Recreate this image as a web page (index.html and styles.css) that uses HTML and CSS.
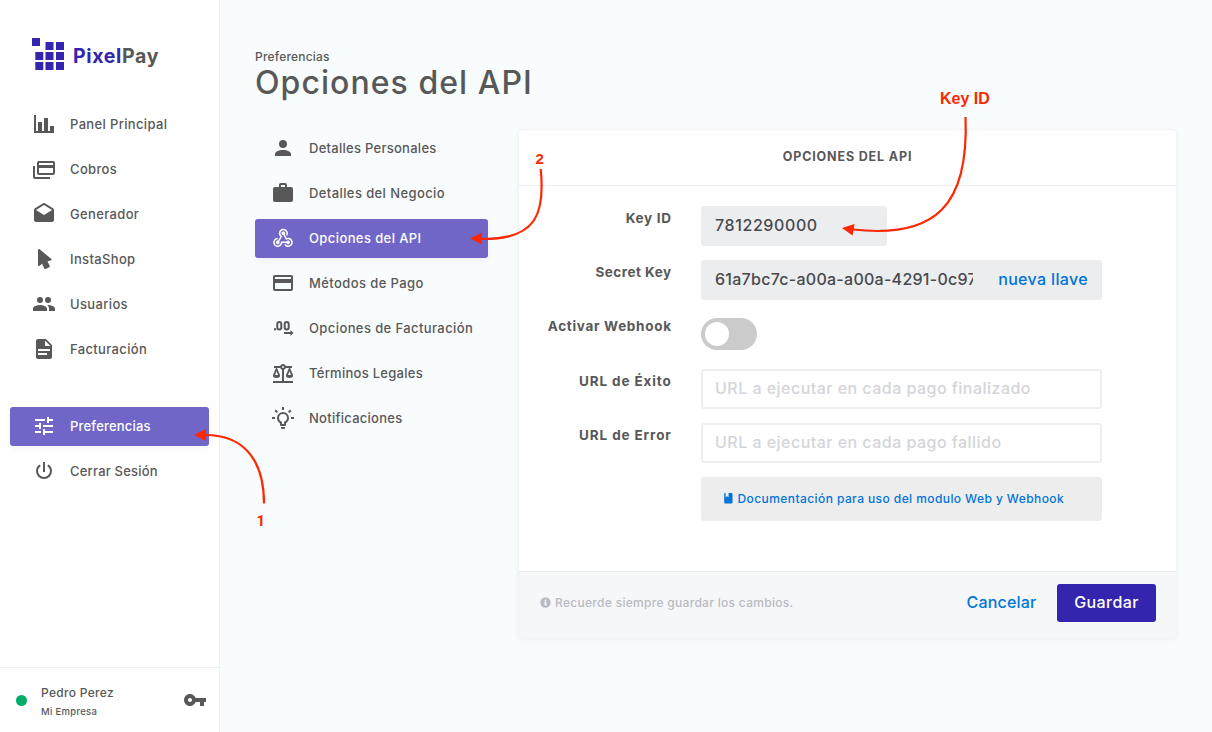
FILE: index.html
```html
<!DOCTYPE html>
<html lang="es">
<head>
<meta charset="utf-8">
<title>PixelPay - Opciones del API</title>
<link rel="stylesheet" href="styles.css">
</head>
<body>
<div class="app">
  <aside class="sidebar">
    <div class="brand">
      <svg class="brand-mark" width="32" height="32" viewBox="0 0 32 32"><path d="M0 0h8v8H0zM13.5 4h8v8h-8zM24 4h8v8h-8zM3.3 14h8v8h-8zM13.5 14h8v8h-8zM24 14h8v8h-8zM3.3 24h8v8h-8zM13.5 24h8v8h-8zM24 24h8v8h-8z"/></svg>
      <span class="brand-name"><span class="brand-pixel">Pixel</span>Pay</span>
    </div>
    <nav class="menu">
      <a class="item"><svg class="icon" viewBox="0 0 24 24"><path d="M22,21H2V3H4V19H6V10H10V19H12V6H16V19H18V14H22V21Z"/></svg><span>Panel Principal</span></a>
      <a class="item"><svg class="icon" viewBox="0 0 24 24"><path d="M21,8V6H7V8H21M21,16V11H7V16H21M21,4A2,2 0 0,1 23,6V16A2,2 0 0,1 21,18H7C5.89,18 5,17.1 5,16V6C5,4.89 5.89,4 7,4H21M3,20H18V22H3A2,2 0 0,1 1,20V9H3V20Z"/></svg><span>Cobros</span></a>
      <a class="item"><svg class="icon" viewBox="0 0 24 24"><path d="M4,8L12,13L20,8V8L12,3L4,8V8M22,8V18A2,2 0 0,1 20,20H4A2,2 0 0,1 2,18V8C2,7.27 2.39,6.64 2.97,6.29L12,0.64L21.03,6.29C21.61,6.64 22,7.27 22,8Z"/></svg><span>Generador</span></a>
      <a class="item"><svg class="icon" viewBox="0 0 24 24"><path d="M13.64,21.97C13.14,22.21 12.54,22 12.31,21.5L10.13,16.76L7.62,18.78C7.45,18.92 7.24,19 7,19A1,1 0 0,1 6,18V3A1,1 0 0,1 7,2C7.24,2 7.47,2.09 7.64,2.23L7.65,2.22L19.14,11.86C19.57,12.22 19.62,12.85 19.27,13.27C19.12,13.45 18.91,13.57 18.7,13.61L15.54,14.23L17.74,18.96C18,19.46 17.76,20.05 17.26,20.28L13.64,21.97Z"/></svg><span>InstaShop</span></a>
      <a class="item"><svg class="icon" viewBox="0 0 24 24"><path d="M16,13C15.71,13 15.38,13 15.03,13.05C16.19,13.89 17,15 17,16.5V19H23V16.5C23,14.17 18.33,13 16,13M8,13C5.67,13 1,14.17 1,16.5V19H15V16.5C15,14.17 10.33,13 8,13M8,11A3,3 0 0,0 11,8A3,3 0 0,0 8,5A3,3 0 0,0 5,8A3,3 0 0,0 8,11M16,11A3,3 0 0,0 19,8A3,3 0 0,0 16,5A3,3 0 0,0 13,8A3,3 0 0,0 16,11Z"/></svg><span>Usuarios</span></a>
      <a class="item"><svg class="icon" viewBox="0 0 24 24"><path d="M13,9H18.5L13,3.5V9M6,2H14L20,8V20A2,2 0 0,1 18,22H6C4.89,22 4,21.1 4,20V4C4,2.89 4.89,2 6,2M15,18V16H6V18H15M18,14V12H6V14H18Z"/></svg><span>Facturación</span></a>
    </nav>
    <nav class="menu menu-secondary">
      <a class="item active"><svg class="icon" viewBox="0 0 24 24"><path d="M3,17V19H9V17H3M3,5V7H13V5H3M13,21V19H21V17H13V15H11V21H13M7,9V11H3V13H7V15H9V9H7M21,13V11H11V13H21M15,9H17V7H21V5H17V3H15V9Z"/></svg><span>Preferencias</span></a>
      <a class="item"><svg class="icon" viewBox="0 0 24 24"><path d="M16.56,5.44L15.11,6.89C16.84,7.94 18,9.83 18,12A6,6 0 0,1 12,18A6,6 0 0,1 6,12C6,9.83 7.16,7.94 8.88,6.88L7.44,5.44C5.36,6.88 4,9.28 4,12A8,8 0 0,0 12,20A8,8 0 0,0 20,12C20,9.28 18.64,6.88 16.56,5.44M13,3H11V13H13"/></svg><span>Cerrar Sesión</span></a>
    </nav>
    <div class="account">
      <span class="status"></span>
      <div class="who"><span class="who-name">Pedro Perez</span><span class="who-org">Mi Empresa</span></div>
      <svg class="icon" viewBox="0 0 24 24"><path d="M12.65 10C11.83 7.67 9.61 6 7 6c-3.31 0-6 2.69-6 6s2.69 6 6 6c2.61 0 4.83-1.67 5.65-4H17v4h4v-4h2v-4H12.65zM7 14c-1.1 0-2-.9-2-2s.9-2 2-2 2 .9 2 2-.9 2-2 2z"/></svg>
    </div>
  </aside>

  <main class="main">
    <header class="heading">
      <span class="crumb">Preferencias</span>
      <h1 class="title">Opciones del API</h1>
    </header>
    <div class="columns">
      <nav class="menu submenu">
        <a class="item"><svg class="icon" viewBox="0 0 24 24"><path d="M12,4A4,4 0 0,1 16,8A4,4 0 0,1 12,12A4,4 0 0,1 8,8A4,4 0 0,1 12,4M12,14C16.42,14 20,15.79 20,18V20H4V18C4,15.79 7.58,14 12,14Z"/></svg><span>Detalles Personales</span></a>
        <a class="item"><svg class="icon" viewBox="0 0 24 24"><path d="M10,2H14A2,2 0 0,1 16,4V6H20A2,2 0 0,1 22,8V19A2,2 0 0,1 20,21H4C2.89,21 2,20.1 2,19V8C2,6.89 2.89,6 4,6H8V4C8,2.89 8.89,2 10,2M14,6V4H10V6H14Z"/></svg><span class="loose">Detalles del Negocio</span></a>
        <a class="item active"><svg class="icon" viewBox="0 0 24 24"><path d="M10.46,19C9,21.07 6.15,21.59 4.09,20.15C2.04,18.71 1.56,15.84 3,13.75C3.87,12.5 5.21,11.83 6.58,11.77L6.63,13.2C5.72,13.27 4.84,13.74 4.27,14.56C3.27,16 3.58,17.94 4.95,18.91C6.33,19.87 8.26,19.5 9.26,18.07C9.57,17.62 9.75,17.13 9.82,16.63V15.62L15.4,15.58L15.47,15.47C16,14.55 17.15,14.23 18.05,14.75C18.95,15.27 19.26,16.43 18.73,17.35C18.2,18.26 17.04,18.58 16.14,18.06C15.73,17.83 15.44,17.46 15.31,17.04L11.24,17.06C11.13,17.73 10.87,18.38 10.46,19M17.74,11.86C20.27,12.17 22.07,14.44 21.76,16.93C21.45,19.43 19.15,21.2 16.62,20.89C15.13,20.71 13.9,19.86 13.19,18.68L14.43,17.96C14.92,18.73 15.75,19.28 16.75,19.41C18.5,19.62 20.05,18.43 20.26,16.76C20.47,15.09 19.23,13.56 17.5,13.35C16.96,13.29 16.44,13.36 15.97,13.53L15.12,13.97L12.54,9.2H12.32C11.26,9.16 10.41,8.29 10.44,7.25C10.47,6.21 11.4,5.4 12.45,5.44C13.5,5.5 14.33,6.35 14.3,7.39C14.28,7.83 14.11,8.23 13.84,8.54L15.74,12.05C16.36,11.85 17.04,11.78 17.74,11.86M8.25,9.14C7.25,6.79 8.31,4.1 10.62,3.12C12.94,2.14 15.62,3.25 16.62,5.6C17.21,6.97 17.09,8.47 16.42,9.67L15.18,8.95C15.6,8.14 15.67,7.15 15.27,6.22C14.59,4.62 12.78,3.85 11.23,4.5C9.67,5.16 8.97,7 9.65,8.6C9.93,9.26 10.4,9.77 10.97,10.11L11.36,10.32L8.29,15.31C8.32,15.36 8.36,15.42 8.39,15.5C8.88,16.41 8.54,17.56 7.62,18.05C6.71,18.54 5.56,18.18 5.06,17.24C4.57,16.31 4.91,15.16 5.83,14.67C6.22,14.46 6.65,14.41 7.06,14.5L9.37,10.73C8.9,10.3 8.5,9.76 8.25,9.14Z"/></svg><span class="loose">Opciones del API</span></a>
        <a class="item"><svg class="icon" viewBox="0 0 24 24"><path d="M20,8H4V6H20M20,18H4V12H20M20,4H4C2.89,4 2,4.89 2,6V18A2,2 0 0,0 4,20H20A2,2 0 0,0 22,18V6C22,4.89 21.1,4 20,4Z"/></svg><span class="loose">Métodos de Pago</span></a>
        <a class="item"><svg class="icon" viewBox="0 0 24 24"><rect x="3" y="12.200" width="2" height="2.200"/><g class="stroke"><rect x="6.300" y="6.100" width="4" height="7.300" rx="1.900"/><rect x="13.700" y="6.100" width="4" height="7.300" rx="1.900"/></g><path d="M13 16h6.500v-2l3 3-3 3v-2H13z"/></svg><span class="loose">Opciones de Facturación</span></a>
        <a class="item"><svg class="icon" viewBox="0 0 24 24"><path d="M12,3C10.73,3 9.6,3.8 9.18,5H3V7H4.95L2,14C1.53,16 3,17 5.5,17C8,17 9.56,16 9,14L6.05,7H9.17C9.5,7.85 10.15,8.5 11,8.83V20H2V22H22V20H13V8.82C13.85,8.5 14.5,7.85 14.82,7H17.95L15,14C14.53,16 16,17 18.5,17C21,17 22.56,16 22,14L19.05,7H21V5H14.83C14.4,3.8 13.27,3 12,3M12,5A1,1 0 0,1 13,6A1,1 0 0,1 12,7A1,1 0 0,1 11,6A1,1 0 0,1 12,5M5.5,10.25L7,14H4L5.5,10.25M18.5,10.25L20,14H17L18.5,10.25Z"/></svg><span>Términos Legales</span></a>
        <a class="item"><svg class="icon" viewBox="0 0 24 24"><path d="M20,11H23V13H20V11M1,11H4V13H1V11M13,1V4H11V1H13M4.92,3.5L7.05,5.64L5.63,7.05L3.5,4.93L4.92,3.5M16.95,5.63L19.07,3.5L20.5,4.93L18.37,7.05L16.95,5.63M12,6A6,6 0 0,1 18,12C18,14.22 16.79,16.16 15,17.2V19A1,1 0 0,1 14,20H10A1,1 0 0,1 9,19V17.2C7.21,16.16 6,14.22 6,12A6,6 0 0,1 12,6M14,21V22A1,1 0 0,1 13,23H11A1,1 0 0,1 10,22V21H14M11,18H13V15.87C14.73,15.43 16,13.86 16,12A4,4 0 0,0 12,8A4,4 0 0,0 8,12C8,13.86 9.27,15.43 11,15.87V18Z"/></svg><span>Notificaciones</span></a>
      </nav>

      <section class="card">
        <h2 class="card-title">OPCIONES DEL API</h2>
        <div class="form">
          <span class="label">Key ID</span>
          <div class="field readonly short"><span class="key-value">7812290000</span></div>
          <span class="label label-secret">Secret Key</span>
          <div class="field readonly"><span class="secret">61a7bc7c-a00a-a00a-4291-0c97</span><a class="link renew">nueva llave</a></div>
          <span class="label">Activar Webhook</span>
          <div class="toggle-row"><span class="toggle"></span></div>
          <span class="label label-url">URL de Éxito</span>
          <div class="field"><span class="placeholder">URL a ejecutar en cada pago finalizado</span></div>
          <span class="label label-url">URL de Error</span>
          <div class="field"><span class="placeholder">URL a ejecutar en cada pago fallido</span></div>
          <div class="docs"><svg width="9" height="11" viewBox="0 0 9 11"><path d="M1.2 0H1.6V4.2L3.1 3.2L4.6 4.2V0H7.4Q8.5 0 8.5 1V9.6Q8.5 10.6 7.4 10.6H1.2Q.2 10.6 .2 9.6V1Q.2 0 1.2 0Z"/></svg><a class="link docs-link">Documentación para uso del modulo Web y Webhook</a></div>
        </div>
        <footer class="card-footer">
          <svg width="11" height="11" viewBox="0 0 11 11"><path fill-rule="evenodd" d="M5.5 .3a5.2 5.2 0 1 0 0 10.4a5.2 5.2 0 1 0 0-10.4zM4.7 2.5h1.6v1.4H4.7zM4.2 4.8h2.1v2.5h.6v1H4.2v-1h.6V5.8h-.6z"/></svg>
          <span class="reminder">Recuerde siempre guardar los cambios.</span>
          <a class="link cancel">Cancelar</a>
          <button class="save" type="button">Guardar</button>
        </footer>
      </section>
    </div>
  </main>

  <svg class="notes" width="1212" height="732" viewBox="0 0 1212 732">
    <g class="curves">
      <path d="M264 503.500C264 465 248 435 205 435"/>
      <path d="M540.700 169C545 212 538 240 481 239"/>
      <path d="M965.500 117C969 205 936 239 853 229.500"/>
    </g>
    <path d="M194 435L206 429V441ZM470 238.500L482 232.500V244.500ZM842 228L854.500 224L852.500 235.500Z"/>
    <text class="step-one" x="256.500" y="526">1</text>
    <text x="535.500" y="164">2</text>
    <text class="key-note" x="940" y="104">Key ID</text>
  </svg>
</div>
</body>
</html>
```
FILE: styles.css
```css
* { box-sizing: border-box; }

body {
  margin: 0;
  font-family: Inter, "Open Sans", sans-serif;
  font-weight: 500;
  font-size: 13px;
  color: #585858;
  background: #f8fcfd;
}

.app { position: relative; display: flex; width: 1212px; height: 732px; overflow: hidden; }

.icon { width: 24px; height: 24px; flex: none; fill: currentColor; }
.stroke { fill: none; stroke: currentColor; stroke-width: 2; }

.sidebar {
  display: flex;
  flex-direction: column;
  flex: none;
  width: 220px;
  background: #fff;
  border-right: 1px solid #eff2f3;
}

.brand { display: flex; align-items: center; gap: 9px; height: 105px; padding: 3px 0 0 32px; }
.brand-mark { fill: #3425af; }
.brand-name { padding-top: 4px; font-size: 19.500px; font-weight: 700; letter-spacing: 0.65px; }
.brand-pixel { color: #3425af; }

.menu { display: flex; flex-direction: column; gap: 6px; padding: 0 10px; }
.menu-secondary { margin-top: 38px; }
.item {
  display: flex;
  align-items: center;
  gap: 14px;
  height: 39px;
  padding: 0 0 1px 22px;
  border-radius: 3px;
  white-space: nowrap;
  letter-spacing: 0.35px;
}
.menu-secondary .item { letter-spacing: 0.2px; }
.active { color: #fff; background: #7066c8; box-shadow: 0 3px 6px rgba(60, 60, 120, 0.05); }

.account {
  display: flex;
  align-items: center;
  height: 65px;
  margin-top: auto;
  padding: 0 12px 0 16px;
  border-top: 1px solid #f0f1f2;
}
.status { width: 11px; height: 11px; border-radius: 50%; background: #00ad68; }
.who { display: flex; flex-direction: column; flex: 1; gap: 5px; padding: 3px 0 0 14px; }
.who-name { font-size: 12px; line-height: 16px; letter-spacing: 0.3px; }
.who-org { font-size: 9.500px; line-height: 12px; letter-spacing: 0.3px; }

.main { display: flex; flex-direction: column; flex: 1; padding: 0 35px; }
.heading { display: flex; flex-direction: column; height: 129px; padding-top: 49px; }
.crumb { font-size: 12px; line-height: 16px; letter-spacing: 0.2px; }
.title { margin: -2px 0 0; font-size: 32px; font-weight: 500; line-height: 40px; letter-spacing: 1.05px; }

.columns { display: flex; align-items: flex-start; gap: 30px; }
.submenu { width: 233px; padding: 0; }
.submenu .item { padding-left: 16px; letter-spacing: 0.27px; }
.submenu .loose { letter-spacing: 0.4px; }

.card {
  display: flex;
  flex-direction: column;
  width: 659px;
  height: 510px;
  background: #fff;
  border: 1px solid #f1f4f5;
  border-radius: 4px;
  box-shadow: 0 2px 6px rgba(40, 60, 80, 0.04);
}
.card-title {
  display: flex;
  align-items: center;
  justify-content: center;
  height: 56px;
  margin: 0;
  padding-bottom: 2px;
  border-bottom: 1px solid #ebecee;
  font-size: 12.500px;
  font-weight: 700;
  letter-spacing: 0.85px;
}

.form {
  display: grid;
  grid-template-columns: 152px 401px;
  grid-template-rows: 40px 40px 41px 40px 40px 44px;
  column-gap: 30px;
  row-gap: 14px;
  padding-top: 20px;
  flex: 1;
}
.label {
  margin-right: -0.7px;
  padding-top: 4px;
  font-size: 13.500px;
  font-weight: 700;
  line-height: 16px;
  letter-spacing: 0.7px;
  text-align: right;
  white-space: nowrap;
}
.label-secret { letter-spacing: 0.5px; }
.label-url { letter-spacing: 0.88px; }
.field {
  display: flex;
  align-items: center;
  height: 40px;
  padding: 0 12px 2px;
  border: 2px solid #eeeeef;
  border-radius: 3px;
  font-size: 16px;
  white-space: nowrap;
}
.readonly { background: #ecedef; border-color: #ecedef; color: #47494d; }
.short { width: 186px; }
.key-value { letter-spacing: 0.6px; }
.secret { width: 258px; overflow: hidden; line-height: 24px; letter-spacing: 0.27px; }
.placeholder { color: #d4d5d9; letter-spacing: 0.47px; }
.link { color: #0074d9; }
.renew { margin-left: auto; letter-spacing: 0.35px; }
.toggle-row { padding-top: 4px; }
.toggle { display: flex; align-items: center; width: 56px; height: 32px; padding-left: 4px; border-radius: 16px; background: #cbcbcb; }
.toggle::before { content: ""; width: 24px; height: 24px; border-radius: 50%; background: #fff; }
.docs {
  grid-column: 2;
  display: flex;
  align-items: center;
  gap: 4.500px;
  padding: 0 0 1px 23px;
  border-radius: 3px;
  background: #ededed;
  font-size: 12px;
  letter-spacing: 0.42px;
  white-space: nowrap;
}
.docs svg { fill: #0074d9; }

.card-footer {
  display: flex;
  align-items: center;
  height: 67px;
  padding: 0 20px 4px 21px;
  background: #f6f7f9;
  border-top: 1px solid #ebecee;
  border-radius: 0 0 4px 4px;
  font-size: 16px;
}
.card-footer svg { margin-bottom: 1px; fill: #b9bac2; }
.reminder { margin-left: 4px; padding-bottom: 1px; font-size: 12px; letter-spacing: 0.3px; color: #b9bac2; }
.cancel { margin-left: auto; padding-bottom: 2px; letter-spacing: 0.2px; }
.save {
  width: 99px;
  height: 38px;
  margin-left: 20.500px;
  padding: 0 0 2px;
  border: 0;
  border-radius: 3px;
  background: #3425af;
  color: #fff;
  font: inherit;
  letter-spacing: 0.4px;
}

.notes { position: absolute; left: 0; top: 0; fill: #ff2600; pointer-events: none; }
.curves { fill: none; stroke: #ff2600; stroke-width: 2.200; }
.notes text { font: bold 15px "Liberation Sans", Arial, sans-serif; }
.notes .step-one { font-family: Roboto, sans-serif; }
.notes .key-note { font-size: 16px; }
```
